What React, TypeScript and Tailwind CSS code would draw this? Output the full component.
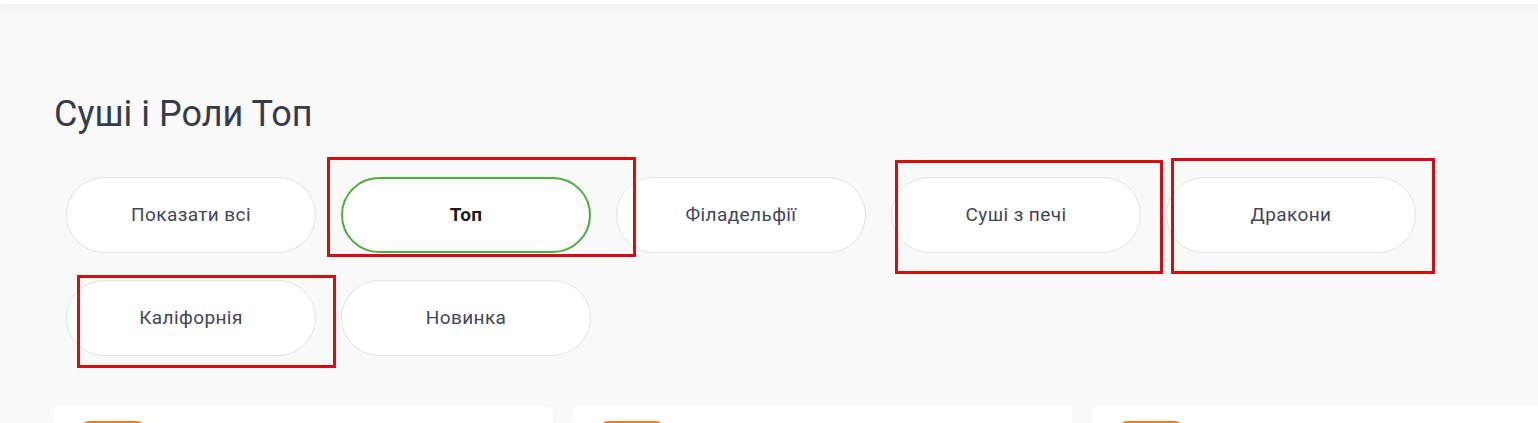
import React from "react";

const filters = [
  "Показати всі",
  "Топ",
  "Філадельфії",
  "Суші з печі",
  "Дракони",
  "Каліфорнія",
  "Новинка",
];

const active = "Топ";

// annotation frames drawn over the screenshot
const marks = [
  { left: 327, top: 157, width: 309, height: 100 },
  { left: 895, top: 160, width: 268, height: 114 },
  { left: 1171, top: 158, width: 264, height: 116 },
  { left: 77, top: 275, width: 259, height: 93 },
];

function FilterButton({ label }: { label: string }) {
  const isActive = label === active;
  return (
    <button
      type="button"
      className={
        isActive
          ? "h-[76px] w-[250px] rounded-full border-2 border-[#4caf3f] bg-white text-[19px] font-bold tracking-[0.2px] text-[#1c1c1c]"
          : "h-[76px] w-[250px] rounded-full border border-[#e1e3ea] bg-white text-[19px] tracking-[0.4px] text-[#3f4759]"
      }
    >
      {label}
    </button>
  );
}

function ProductCard() {
  return (
    <div className="h-[60px] w-[499px] shrink-0 rounded-[6px] bg-white px-6 pt-[15px]">
      <div className="h-6 w-[70px] rounded-full bg-[#f07a1c]" />
    </div>
  );
}

export default function App() {
  return (
    <div
      className="relative h-[423px] w-[1538px] overflow-hidden bg-[#f9f9f9]"
      style={{ fontFamily: "Roboto, 'Noto Sans', sans-serif" }}
    >
      <div className="h-1 w-full bg-white shadow-[0_2px_10px_rgba(0,0,0,0.08)]" />

      <div className="pl-[54px] pt-[88px]">
        <h2 className="text-[36px] leading-[44px] text-[#363b4b]">Суші і Роли Топ</h2>

        <div className="ml-3 mt-[41px] grid w-[1350px] grid-cols-[repeat(5,250px)] gap-x-[25px] gap-y-[27px]">
          {filters.map((f) => (
            <FilterButton key={f} label={f} />
          ))}
        </div>

        <div className="mt-[50px] flex gap-5">
          <ProductCard />
          <ProductCard />
          <ProductCard />
        </div>
      </div>

      {marks.map((m, i) => (
        <div
          key={i}
          className="pointer-events-none absolute border-[3px] border-[#d80d0d]"
          style={{ left: m.left, top: m.top, width: m.width, height: m.height }}
        />
      ))}
    </div>
  );
}
